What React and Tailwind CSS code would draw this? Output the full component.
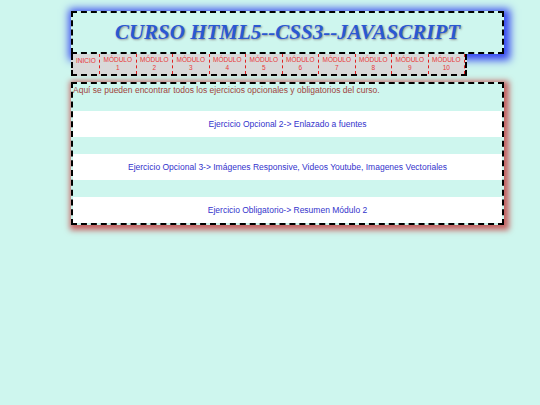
import React from "react";

export default function App() {
  const mods = [1, 2, 3, 4, 5, 6, 7, 8, 9, 10];
  return (
    <div className="min-h-[405px] w-[540px] bg-[#cef6ee] pt-[11px]" style={{ fontFamily: '"Liberation Sans", Arial, sans-serif' }}>
      <div className="ml-[71px] w-[433px]">
        <header className="h-[43px] border-2 border-dashed border-black bg-[#cef6ee] shadow-[2px_2px_8px_4px_#3344f0] flex items-center justify-center">
          <h1
            className="text-[21px] font-bold italic text-[#2a58d2] leading-none [text-shadow:1px_1px_2px_#909090]"
            style={{ fontFamily: '"Liberation Serif", "Times New Roman", serif' }}
          >
            CURSO HTML5--CSS3--JAVASCRIPT
          </h1>
        </header>
        <nav className="flex w-[396px] h-[22px] border-2 border-t-0 border-dashed border-black bg-[#d9d9d9]">
          <div className="w-[27px] border-r border-dashed border-[#e02020] bg-[#d9d9d9] text-[6.5px] leading-[8px] text-[#e83838] text-center pt-[3px]">
            INICIO
          </div>
          {mods.map((m) => (
            <div
              key={m}
              className="w-[36.5px] border-r border-dashed border-[#e02020] text-[6.5px] leading-[8px] text-[#e83838] text-center pt-[2px]"
            >
              <div>MÓDULO</div>
              <div>{m}</div>
            </div>
          ))}
        </nav>
        <main className="mt-[6px] border-2 border-dashed border-black bg-[#cef6ee] shadow-[2px_2px_6px_3px_#c45e5e]">
          <p className="text-[8.5px] leading-[10px] text-[#a04440] pt-[1px]">
            Aquí se pueden encontrar todos los ejercicios opcionales y obligatorios del curso.
          </p>
          <div className="mt-[16px] flex flex-col gap-[17px]">
            {[
              "Ejercicio Opcional 2-> Enlazado a fuentes",
              "Ejercicio Opcional 3-> Imágenes Responsive, Videos Youtube, Imagenes Vectoriales",
              "Ejercicio Obligatorio-> Resumen Módulo 2",
            ].map((t) => (
              <div key={t} className="h-[26px] bg-white flex items-center justify-center">
                <span className="text-[8.5px] text-[#3333cc]">{t}</span>
              </div>
            ))}
          </div>
        </main>
      </div>
    </div>
  );
}
